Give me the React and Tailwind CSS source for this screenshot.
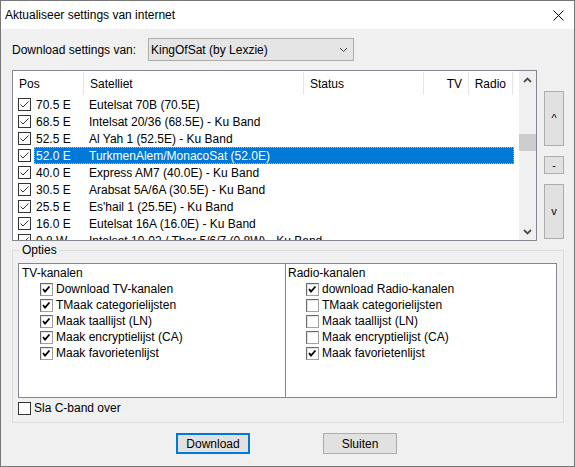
import React from 'react';

const rows = [
  ['70.5 E', 'Eutelsat 70B (70.5E)'],
  ['68.5 E', 'Intelsat 20/36 (68.5E) - Ku Band'],
  ['52.5 E', 'Al Yah 1 (52.5E) - Ku Band'],
  ['52.0 E', 'TurkmenAlem/MonacoSat (52.0E)', true],
  ['40.0 E', 'Express AM7 (40.0E) - Ku Band'],
  ['30.5 E', 'Arabsat 5A/6A (30.5E) - Ku Band'],
  ['25.5 E', "Es'hail 1 (25.5E) - Ku Band"],
  ['16.0 E', 'Eutelsat 16A (16.0E) - Ku Band'],
  ['0.8 W', 'Intelsat 10-02 / Thor 5/6/7 (0.8W) - Ku Band'],
];

const tvOpts = [
  ['Download TV-kanalen', true],
  ['TMaak categorielijsten', true],
  ['Maak taallijst (LN)', true],
  ['Maak encryptielijst (CA)', true],
  ['Maak favorietenlijst', true],
];

const radioOpts = [
  ['download Radio-kanalen', true],
  ['TMaak categorielijsten', false],
  ['Maak taallijst (LN)', false],
  ['Maak encryptielijst (CA)', false],
  ['Maak favorietenlijst', true],
];

// thin check used inside the list view
function ListCheck() {
  return (
    <svg width="13" height="13" viewBox="0 0 13 13" className="shrink-0">
      <rect x="0.5" y="0.5" width="12" height="12" fill="#fff" stroke="#333" />
      <path d="M2.5 6.5 L5 9 L10.5 3.5" fill="none" stroke="#333" strokeWidth="1" />
    </svg>
  );
}

// classic 3d style checkbox for the options panels
function OptCheck({ checked }) {
  return (
    <svg width="13" height="13" viewBox="0 0 13 13" className="shrink-0">
      <rect x="0.5" y="0.5" width="12" height="12" fill="#fff" stroke="#a0a0a0" />
      <path d="M0.5 12.5 L0.5 0.5 L12.5 0.5" fill="none" stroke="#696969" />
      <path d="M1.5 11.5 L1.5 1.5 L11.5 1.5" fill="none" stroke="#e3e3e3" />
      {checked && (
        <path d="M3 6 L5 8.5 L9.5 3.5" fill="none" stroke="#000" strokeWidth="1.8" />
      )}
    </svg>
  );
}

function Chevron({ up }) {
  return (
    <svg width="9" height="6" viewBox="0 0 9 6">
      <path d={up ? 'M1 5 L4.5 1.5 L8 5' : 'M1 1 L4.5 4.5 L8 1'} fill="none" stroke="#505050" strokeWidth="1.8" />
    </svg>
  );
}

function Option({ label, checked, indent }) {
  return (
    <div className={`flex items-center h-[16px] ${indent}`}>
      <OptCheck checked={checked} />
      <span className="ml-[3px] leading-[16px] whitespace-nowrap">{label}</span>
    </div>
  );
}

export default function App() {
  return (
    <div className="w-[575px] h-[467px] border border-[#777] bg-[#f0f0f0] flex flex-col overflow-hidden text-[12px] text-black font-['Liberation_Sans',Arial,sans-serif]">
      {/* title bar */}
      <div className="h-[28px] bg-white flex items-center justify-between shrink-0">
        <span className="pl-[4px]">Aktualiseer settings van internet</span>
        <svg width="11" height="11" viewBox="0 0 11 11" className="mr-[10px]">
          <path d="M0.5 0.5 L10.5 10.5 M10.5 0.5 L0.5 10.5" stroke="#000" strokeWidth="1" />
        </svg>
      </div>

      {/* source selection */}
      <div className="flex items-center pl-[11px] pt-[9px]">
        <span className="w-[136px] whitespace-nowrap">Download settings van:</span>
        <div className="w-[206px] h-[23px] bg-[#e5e5e5] border border-[#adadad] flex items-center justify-between pl-[2px] pr-[5px]">
          <span>KingOfSat (by Lexzie)</span>
          <svg width="9" height="6" viewBox="0 0 9 6">
            <path d="M1 1 L4.5 4.5 L8 1" fill="none" stroke="#444" strokeWidth="1" />
          </svg>
        </div>
      </div>

      {/* satellite list + move buttons */}
      <div className="flex pl-[11px] mt-[9px]">
        <div className="w-[525px] h-[171px] border border-[#828790] bg-white flex overflow-hidden">
          <div className="w-[506px] flex flex-col overflow-hidden">
            <div className="h-[25px] shrink-0 flex items-stretch">
              <div className="w-[70px] pl-[6px] flex items-center">Pos</div>
              <div className="w-[220px] pl-[6px] flex items-center border-l border-[#e5e5e5] my-[1px]">Satelliet</div>
              <div className="w-[120px] pl-[6px] flex items-center border-l border-[#e5e5e5] my-[1px]">Status</div>
              <div className="w-[45px] pr-[6px] flex items-center justify-end border-l border-[#e5e5e5] my-[1px]">TV</div>
              <div className="w-[45px] pr-[6px] flex items-center justify-end border-l border-[#e5e5e5] border-r my-[1px]">Radio</div>
            </div>
            {rows.map(([pos, name, sel]) => (
              <div key={pos} className="h-[17px] shrink-0 flex items-center">
                <div className="pl-[5px] pr-[3px] flex items-center">
                  <ListCheck />
                </div>
                <div
                  className={`w-[480px] h-[17px] flex items-center border ${
                    sel ? 'bg-[#0078d7] text-white border-dotted border-[#f2a84a]' : 'border-transparent'
                  }`}
                >
                  <span className="w-[48px] pl-[1px] whitespace-nowrap">{pos}</span>
                  <span className="pl-[6px] whitespace-nowrap">{name}</span>
                </div>
              </div>
            ))}
          </div>
          {/* scrollbar */}
          <div className="w-[17px] bg-[#f0f0f0] flex flex-col">
            <div className="h-[17px] flex items-center justify-center">
              <Chevron up />
            </div>
            <div className="h-[46px]" />
            <div className="h-[17px] bg-[#cdcdcd]" />
            <div className="flex-1" />
            <div className="h-[17px] flex items-center justify-center">
              <Chevron />
            </div>
          </div>
        </div>
        <div className="ml-[7px] pt-[21px] flex flex-col gap-[10px]">
          <button className="w-[20px] h-[55px] bg-[#e1e1e1] border border-[#adadad] flex items-center justify-center text-[11px]">^</button>
          <button className="w-[20px] h-[18px] bg-[#e1e1e1] border border-[#adadad] flex items-center justify-center text-[11px]">-</button>
          <button className="w-[20px] h-[55px] bg-[#e1e1e1] border border-[#adadad] flex items-center justify-center text-[11px]">v</button>
        </div>
      </div>

      {/* options group */}
      <div className="ml-[11px] mt-[9px] w-[552px] h-[173px] border border-[#dcdcdc] relative pt-[12px] pl-[5px]">
        <span className="absolute -top-[9px] left-[7px] px-[2px] bg-[#f0f0f0] leading-[16px]">Opties</span>
        <div className="w-[539px] h-[135px] border border-[#828790] bg-white flex">
          <div className="w-[267px] border-r border-[#828790] pl-[3px] pt-[1px]">
            <div className="leading-[16px]">TV-kanalen</div>
            {tvOpts.map(([l, c]) => (
              <Option key={l} label={l} checked={c} indent="ml-[18px]" />
            ))}
          </div>
          <div className="flex-1 pl-[2px] pt-[1px]">
            <div className="leading-[16px]">Radio-kanalen</div>
            {radioOpts.map(([l, c]) => (
              <Option key={l} label={l} checked={c} indent="ml-[18px]" />
            ))}
          </div>
        </div>
        <div className="flex items-center mt-[3px] h-[14px]">
          <svg width="13" height="13" viewBox="0 0 13 13" className="shrink-0">
            <rect x="0.5" y="0.5" width="12" height="12" fill="#fff" stroke="#333" />
          </svg>
          <span className="ml-[3px]">Sla C-band over</span>
        </div>
      </div>

      {/* bottom buttons */}
      <div className="flex pl-[175px] mt-[10px] gap-[73px]">
        <button className="w-[74px] h-[21px] bg-[#e1e1e1] border-2 border-[#0078d7] flex items-center justify-center">Download</button>
        <button className="w-[74px] h-[21px] bg-[#e1e1e1] border border-[#adadad] flex items-center justify-center">Sluiten</button>
      </div>
    </div>
  );
}
